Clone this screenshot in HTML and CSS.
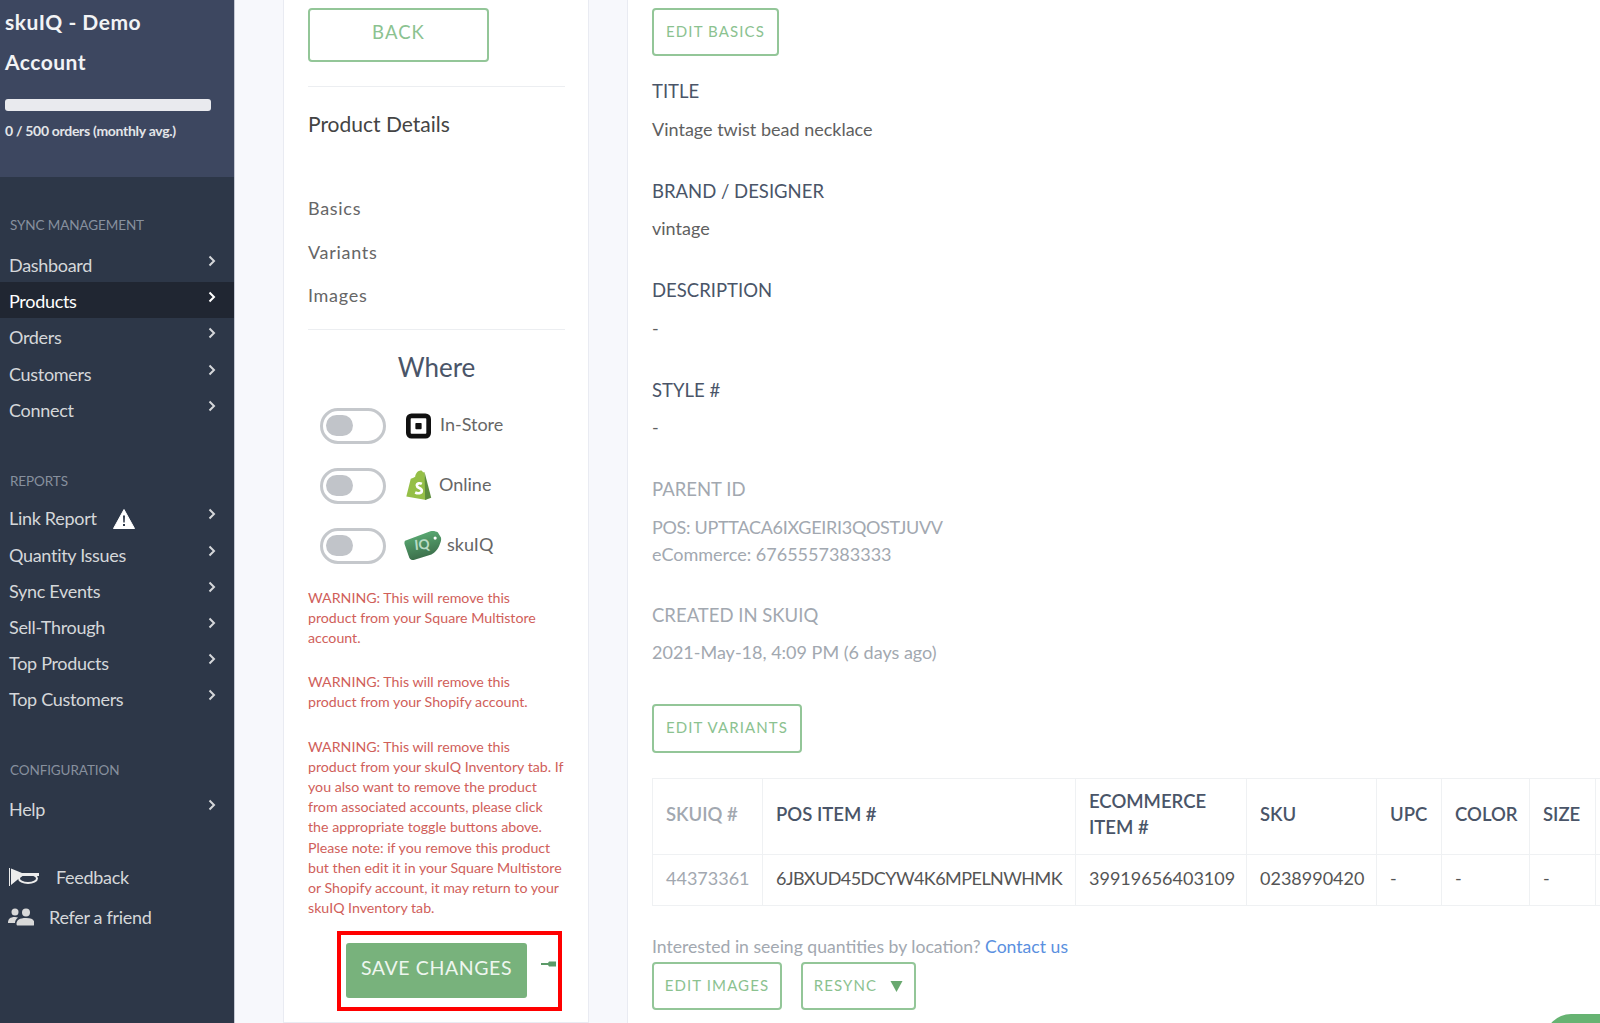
FILE: index.html
```html
<!DOCTYPE html>
<html lang="en">
<head>
    <meta charset="UTF-8">
    <title>skuIQ - Product</title>
    <link rel="stylesheet" href="styles.css">
</head>
<body>
<div class="page">

    <!-- Sidebar -->
    <aside class="sidebar">
        <div class="account">
            <div class="account-name">skuIQ - Demo Account</div>
            <div class="usage-bar"></div>
            <div class="usage-text">0 / 500 orders (monthly avg.)</div>
        </div>

        <div class="nav-title nav-title-first">SYNC MANAGEMENT</div>
        <a class="nav-item"><span>Dashboard</span><svg class="chev" viewBox="0 0 10 12"><path d="M2.5 1.5 7 6l-4.500 4.500"/></svg></a>
        <a class="nav-item active"><span>Products</span><svg class="chev" viewBox="0 0 10 12"><path d="M2.5 1.500 7 6l-4.500 4.500"/></svg></a>
        <a class="nav-item"><span>Orders</span><svg class="chev" viewBox="0 0 10 12"><path d="M2.5 1.500 7 6l-4.500 4.500"/></svg></a>
        <a class="nav-item"><span>Customers</span><svg class="chev" viewBox="0 0 10 12"><path d="M2.5 1.500 7 6l-4.500 4.500"/></svg></a>
        <a class="nav-item"><span>Connect</span><svg class="chev" viewBox="0 0 10 12"><path d="M2.5 1.500 7 6l-4.500 4.500"/></svg></a>

        <div class="nav-title nav-title-reports">REPORTS</div>
        <a class="nav-item"><span>Link Report<svg class="warn" viewBox="0 0 22 20"><path d="M11 .5 21.500 19.500H.5z" fill="#fff" stroke="#fff" stroke-linejoin="round"/><path d="M10 6.500h2l-.3 7h-1.400zM10 15h2v2h-2z" fill="#2d3748"/></svg></span><svg class="chev" viewBox="0 0 10 12"><path d="M2.500 1.500 7 6l-4.500 4.500"/></svg></a>
        <a class="nav-item"><span>Quantity Issues</span><svg class="chev" viewBox="0 0 10 12"><path d="M2.500 1.500 7 6l-4.500 4.500"/></svg></a>
        <a class="nav-item"><span>Sync Events</span><svg class="chev" viewBox="0 0 10 12"><path d="M2.500 1.500 7 6l-4.500 4.500"/></svg></a>
        <a class="nav-item"><span>Sell-Through</span><svg class="chev" viewBox="0 0 10 12"><path d="M2.500 1.500 7 6l-4.500 4.500"/></svg></a>
        <a class="nav-item"><span>Top Products</span><svg class="chev" viewBox="0 0 10 12"><path d="M2.500 1.500 7 6l-4.500 4.500"/></svg></a>
        <a class="nav-item"><span>Top Customers</span><svg class="chev" viewBox="0 0 10 12"><path d="M2.500 1.500 7 6l-4.500 4.500"/></svg></a>

        <div class="nav-title nav-title-config">CONFIGURATION</div>
        <a class="nav-item"><span>Help</span><svg class="chev" viewBox="0 0 10 12"><path d="M2.500 1.500 7 6l-4.500 4.500"/></svg></a>

        <div class="nav-extra nav-feedback">
            <svg class="horn" viewBox="0 0 31 18"><path d="M0 0h1v18H0zM2 .5 13 5h17v3H13L2 17z" fill="#ececec"/><ellipse cx="19" cy="10.500" rx="9" ry="4.500" fill="none" stroke="#ececec" stroke-width="2"/></svg>
            <span>Feedback</span>
        </div>
        <div class="nav-extra nav-refer">
            <svg class="friends" viewBox="0 0 26 18"><g fill="#d9d9d9"><circle cx="7" cy="4" r="3.500"/><circle cx="18" cy="4.500" r="4"/><path d="M0 15c0-4 2-6 7-6 1 0 2 .2 3 .5-2 1.500-3 3.500-3 5.500zM10 17.500c-1 0-1.500-.5-1.500-1.500 0-4 3-6 9.500-6s8.500 2 8.500 6c0 1-.5 1.500-1.500 1.500z"/></g></svg>
            <span>Refer a friend</span>
        </div>
    </aside>

    <!-- Left panel -->
    <section class="panel">
        <button class="btn btn-back">BACK</button>
        <hr class="panel-line">
        <div class="panel-title">Product Details</div>
        <ul class="panel-links">
            <li>Basics</li>
            <li>Variants</li>
            <li>Images</li>
        </ul>
        <hr class="panel-line panel-line-low">
        <div class="where">Where</div>

        <div class="channel">
            <span class="toggle"></span>
            <svg class="logo-square" viewBox="0 0 24 24"><rect x="2.250" y="2.250" width="19.500" height="19.500" rx="3" fill="none" stroke="#111" stroke-width="4.500"/><rect x="9" y="9" width="6" height="6" rx=".8" fill="#111"/></svg>
            <span class="channel-name">In-Store</span>
        </div>
        <div class="channel">
            <span class="toggle"></span>
            <svg class="logo-shopify" viewBox="0 0 24 28"><path d="M1 24 5 8c2-1 3-1.500 4-2 .5-3 2.500-5.500 5-5.500 1 0 1.500.5 2 1.500l1.500 0L19 27z" fill="#95bf47"/><path d="M17.500 2 23.500 25 18 27z" fill="#5e8e3e"/><path d="M15 12.500c-1.500-.8-4.500-.8-4.500 1.500 0 2.500 4.500 2 4.500 4.800 0 2.500-3.500 2.700-6 1.500" fill="none" stroke="#fff" stroke-width="2.400"/></svg>
            <span class="channel-name">Online</span>
        </div>
        <div class="channel channel-skuiq">
            <span class="toggle"></span>
            <svg class="logo-skuiq" viewBox="0 0 36 29"><defs><linearGradient id="tag" x1="0" y1="0" x2=".3" y2="1"><stop offset="0" stop-color="#5fb57a"/><stop offset="1" stop-color="#3c6f4b"/></linearGradient></defs><path d="M1 10 25 1c3-.8 5 0 7 1l3 5c.5 2 0 4-1 6-2 6-5 8-8 10L10 28c-2 .5-4 0-5-2L.5 13c-.2-1 0-2.500.5-3z" fill="url(#tag)"/><text x="10" y="18" class="tag-text" transform="rotate(-6 18 14)">IQ</text><circle cx="29.500" cy="7.500" r="1.500" fill="#fff"/></svg>
            <span class="channel-name">skuIQ</span>
        </div>

        <p class="warning">WARNING: This will remove this<br>product from your Square Multistore<br>account.</p>
        <p class="warning">WARNING: This will remove this<br>product from your Shopify account.</p>
        <p class="warning">WARNING: This will remove this<br>product from your skuIQ Inventory tab. If you also want to remove the product from associated accounts, please click the appropriate toggle buttons above. Please note: if you remove this product but then edit it in your Square Multistore or Shopify account, it may return to your skuIQ Inventory tab.</p>

        <div class="save-wrap">
            <button class="btn-save">SAVE CHANGES</button>
            <svg class="pin" viewBox="0 0 15 8"><path d="M0 3h7l1-1.500h7v5H8L7 5H0z" fill="#5b9a68"/></svg>
            <div class="highlight"></div>
        </div>
    </section>

    <!-- Main content -->
    <main class="main">
        <button class="btn btn-edit">EDIT BASICS</button>

        <div class="field-label field-first">TITLE</div>
        <div class="field-value">Vintage twist bead necklace</div>

        <div class="field-label">BRAND / DESIGNER</div>
        <div class="field-value">vintage</div>

        <div class="field-label">DESCRIPTION</div>
        <div class="field-value">-</div>

        <div class="field-label">STYLE #</div>
        <div class="field-value">-</div>

        <div class="field-label muted">PARENT ID</div>
        <div class="field-value muted"><span class="tight">POS: UPTTACA6IXGEIRI3QOSTJUVV</span><br>eCommerce: 6765557383333</div>

        <div class="field-label muted field-created">CREATED IN SKUIQ</div>
        <div class="field-value muted">2021-May-18, 4:09 PM (6 days ago)</div>

        <button class="btn btn-edit btn-variants">EDIT VARIANTS</button>

        <table class="variants">
            <tr>
                <th class="col-id muted-head">SKUIQ #</th>
                <th class="col-pos">POS ITEM #</th>
                <th class="col-ecom">ECOMMERCE ITEM #</th>
                <th class="col-sku">SKU</th>
                <th class="col-upc">UPC</th>
                <th class="col-color">COLOR</th>
                <th class="col-size">SIZE</th>
                <th></th>
            </tr>
            <tr>
                <td class="muted-cell">44373361</td>
                <td class="pos-cell">6JBXUD45DCYW4K6MPELNWHMK</td>
                <td>39919656403109</td>
                <td>0238990420</td>
                <td>-</td>
                <td>-</td>
                <td>-</td>
                <td></td>
            </tr>
        </table>

        <p class="location-note">Interested in seeing quantities by location? <a href="#">Contact us</a></p>
        <div class="btn-row">
            <button class="btn btn-edit btn-images">EDIT IMAGES</button>
            <button class="btn btn-edit btn-resync">RESYNC<svg class="caret" viewBox="0 0 12 11"><path d="M0 0h12L6 11z" fill="#69a96f"/></svg></button>
        </div>
        <div class="chat-bubble"></div>
    </main>

</div>
</body>
</html>
```

FILE: styles.css
```css
html, body {
    margin: 0;
    height: 100%;
    overflow: hidden;
}
body {
    font-family: Lato, "Open Sans", sans-serif;
    color: #3d4852;
    background-color: #f7f8fc;
}
.page {
    display: flex;
    height: 1023px;
    overflow: hidden;
}

/* Sidebar */
.sidebar {
    width: 234px;
    flex-shrink: 0;
    background-color: #2d3748;
    border-right: 1px solid #c5c9d4;
    color: #d5d7da;
    font-size: 18px;
}
.account {
    height: 177px;
    box-sizing: border-box;
    padding: 2px 22px 0 5px;
    background-color: #3d4760;
    color: #fff;
}
.account-name {
    font-size: 21px;
    font-weight: 700;
    line-height: 40px;
    letter-spacing: .5px;
    color: #f2f3f5;
}
.usage-bar {
    height: 12px;
    width: 206px;
    margin-top: 17px;
    background-color: #e9eaee;
    border-radius: 3px;
}
.usage-text {
    font-size: 14px;
    margin-top: 11px;
    font-weight: 700;
    letter-spacing: -.3px;
    color: #e3e5e8;
}
.nav-title {
    font-size: 13.500px;
    color: #87909e;
    padding-left: 10px;
    line-height: 18px;
    letter-spacing: -.1px;
}
.nav-title-first {
    margin-top: 39px;
    margin-bottom: 12px;
}
.nav-title-reports {
    margin-top: 45px;
    margin-bottom: 9.500px;
}
.nav-title-config {
    margin-top: 44.500px;
    margin-bottom: 10.500px;
}
.nav-item {
    display: flex;
    justify-content: space-between;
    height: 36.200px;
    line-height: 38px;
    padding: 0 17px 0 9px;
    letter-spacing: -.3px;
    overflow: hidden;
}
.nav-item.active {
    background-color: #202632;
    color: #fff;
}
.chev {
    width: 10px;
    height: 12px;
    margin-top: 9px;
    fill: none;
    stroke: currentColor;
    stroke-width: 2;
}
.warn {
    width: 22px;
    height: 20px;
    margin-left: 16px;
    vertical-align: -4px;
}
.nav-extra {
    display: flex;
    align-items: center;
    color: #d5d7da;
    letter-spacing: -.3px;
}
.nav-feedback {
    margin-top: 40px;
    padding-left: 9px;
    gap: 16px;
}
.nav-refer {
    margin-top: 18px;
    padding-left: 8px;
    gap: 15px;
}
.horn {
    width: 31px;
    height: 18px;
}
.friends {
    width: 26px;
    height: 18px;
}

/* Left panel */
.panel {
    width: 306px;
    flex-shrink: 0;
    box-sizing: border-box;
    height: 1023px;
    margin-left: 48px;
    padding: 8px 23px 0 24px;
    background-color: #fff;
    border: 1px solid #e9ebf2;
    border-top: 0;
    position: relative;
}
.btn {
    background-color: #fff;
    border: 2px solid #93c698;
    border-radius: 4px;
    color: #8bc290;
    font-family: inherit;
    letter-spacing: 1.100px;
}
.btn-back {
    width: 181px;
    height: 54px;
    font-size: 18.500px;
    display: block;
    padding-bottom: 7px;
}
.panel-line {
    border: 0;
    border-top: 1px solid #eceef1;
    margin: 24px 0 0;
}
.panel-line-low {
    margin-top: 4px;
}
.panel-title {
    font-size: 21px;
    line-height: 28px;
    color: #444;
    margin-top: 23px;
}
.panel-links {
    list-style: none;
    margin: 56px 0 0;
    padding: 0;
    font-size: 18px;
    letter-spacing: .7px;
    color: #666;
}
.panel-links li {
    height: 43.500px;
    line-height: 28px;
}
.where {
    font-size: 26px;
    line-height: 34px;
    color: #4a5568;
    text-align: center;
    margin-top: 20px;
    margin-bottom: 24px;
}
.channel {
    display: flex;
    align-items: center;
    height: 36px;
    margin-bottom: 24px;
    padding-left: 12px;
    font-size: 18px;
    color: #666;
}
.channel-name {
    padding-bottom: 4px;
}
.toggle {
    box-sizing: border-box;
    width: 66px;
    height: 36px;
    border: 3.500px solid #c5c8cc;
    border-radius: 18px;
    position: relative;
    margin-right: 20px;
    flex-shrink: 0;
}
.toggle::before {
    content: "";
    position: absolute;
    left: 3px;
    top: 4px;
    width: 27px;
    height: 21px;
    border-radius: 11px;
    background-color: #c1c4c9;
}
.logo-square {
    width: 25px;
    height: 28px;
    margin-right: 9px;
}
.logo-shopify {
    width: 27px;
    height: 31px;
    margin-right: 7px;
    margin-left: -1px;
}
.logo-skuiq {
    width: 38px;
    height: 31px;
    margin-left: -2px;
    margin-right: 5px;
}
.tag-text {
    font-size: 13px;
    font-weight: 700;
    fill: #b9dcc4;
}
.warning {
    font-size: 14.200px;
    line-height: 20.200px;
    color: #d0605a;
    margin: 0 0 24px;
}
.save-wrap {
    box-sizing: border-box;
    position: relative;
    width: 225px;
    height: 80px;
    margin: -11px 0 0 29px;
    padding: 12px 0 0 9px;
}
.highlight {
    position: absolute;
    inset: 0;
    border: 4px solid #f00;
}
.btn-save {
    width: 181px;
    height: 55px;
    background-color: #78b27c;
    border: 0;
    border-radius: 3px;
    color: #eef6ef;
    font-family: inherit;
    font-size: 19.500px;
    letter-spacing: .6px;
    padding: 0 0 6px;
}
.pin {
    position: absolute;
    left: 204px;
    top: 29px;
    width: 15px;
    height: 8px;
}

/* Main */
.main {
    flex: 1;
    min-width: 0;
    margin-left: 38px;
    padding: 8px 0 0 24px;
    background-color: #fff;
    border-left: 1px solid #e9ebf2;
    position: relative;
}
.btn-edit {
    font-size: 15px;
    height: 48px;
    width: 127px;
    padding: 0 0 3px;
    display: inline-block;
}
.field-label {
    font-size: 18.500px;
    line-height: 28px;
    color: #4a5568;
    margin-top: 34px;
}
.field-first {
    margin-top: 21px;
}
.field-value {
    font-size: 18px;
    line-height: 27px;
    color: #606060;
    margin-top: 10.500px;
}
.muted,
.field-value.muted {
    color: #a2a8b0;
}
.tight {
    letter-spacing: -.3px;
}
.field-created {
    margin-top: 33px;
}
.btn-variants {
    display: block;
    margin-top: 38px;
    width: 150px;
    height: 49px;
}
.variants {
    border-collapse: collapse;
    margin-top: 25px;
    width: 960px;
    table-layout: fixed;
    font-size: 18px;
}
.variants th, .variants td {
    border: 1px solid #eff1f3;
    padding: 0 13px;
    text-align: left;
    line-height: 26px;
    white-space: nowrap;
}
.variants th {
    height: 76px;
    padding-bottom: 6px;
    box-sizing: border-box;
    font-size: 18.500px;
    font-weight: 600;
    color: #4a5568;
    white-space: normal;
}
.variants td {
    height: 51px;
    padding-bottom: 5px;
    box-sizing: border-box;
    color: #555;
}
.variants .pos-cell {
    letter-spacing: -.55px;
}
.col-id { width: 110px; }
.col-pos { width: 313px; }
.col-ecom { width: 171px; }
.col-sku { width: 130px; }
.col-upc { width: 65px; }
.col-color { width: 88px; }
.col-size { width: 66px; }
.variants .muted-head {
    color: #a2a8b0;
}
.variants .muted-cell {
    color: #a2a8b0;
}
.location-note {
    font-size: 17.600px;
    line-height: 26px;
    color: #a2a8b0;
    margin: 28px 0 0;
}
.location-note a {
    color: #5a90e0;
    text-decoration: none;
}
.btn-row {
    display: flex;
    gap: 19px;
    margin-top: 2px;
}
.btn-images {
    width: 130px;
}
.btn-resync {
    width: 115px;
    display: flex;
    align-items: center;
    justify-content: center;
    gap: 13px;
}
.caret {
    width: 13px;
    height: 11px;
    margin-top: 3px;
}
.chat-bubble {
    position: absolute;
    right: 0;
    top: 1014px;
    width: 55px;
    height: 40px;
    border-radius: 26px 0 0 0;
    background-color: #66b372;
}
```
